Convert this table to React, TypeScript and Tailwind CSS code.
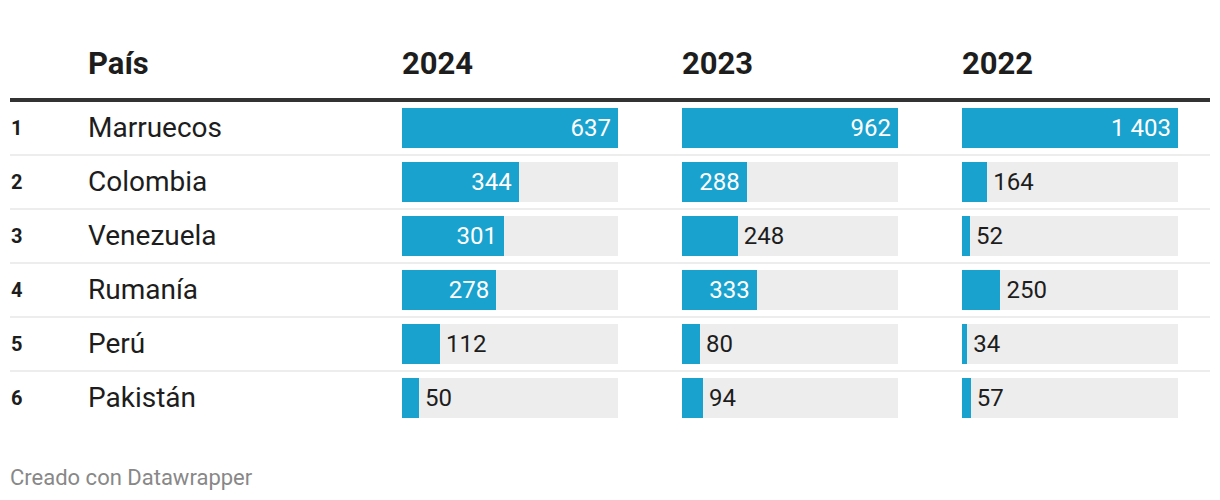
import React from 'react'

type Row = { rank: number; country: string; values: number[] }

const years = ['2024', '2023', '2022']
const maxByYear = [637, 962, 1403]

const rows: Row[] = [
  { rank: 1, country: 'Marruecos', values: [637, 962, 1403] },
  { rank: 2, country: 'Colombia', values: [344, 288, 164] },
  { rank: 3, country: 'Venezuela', values: [301, 248, 52] },
  { rank: 4, country: 'Rumanía', values: [278, 333, 250] },
  { rank: 5, country: 'Perú', values: [112, 80, 34] },
  { rank: 6, country: 'Pakistán', values: [50, 94, 57] },
]

const fmt = (n: number) => (n >= 1000 ? `${Math.floor(n / 1000)}\u00a0${String(n % 1000).padStart(3, '0')}` : String(n))

function Bar({ value, max }: { value: number; max: number }) {
  const width = (value / max) * 216
  const inside = width > 60
  return (
    <div className="relative flex h-[40px] w-[216px] items-center bg-[#ededed] text-[24px]">
      <div className="flex h-full items-center justify-end bg-[#1aa2cf]" style={{ width }}>
        {inside && <span className="pr-[7px] text-white">{fmt(value)}</span>}
      </div>
      {!inside && <span className="pl-[6px] text-[#1d1d1d]">{fmt(value)}</span>}
    </div>
  )
}

export default function App() {
  return (
    <div className="w-[1220px] h-[500px] bg-white px-[10px] font-['Roboto',sans-serif] text-[#1d1d1d]">
      <div className="grid grid-cols-[78px_314px_280px_280px_248px] items-end h-[102px] pb-[16px] border-b-[4px] border-[#333]">
        <div />
        <div className="text-[31px] leading-[36px] font-bold">País</div>
        {years.map((y) => (
          <div key={y} className="text-[31px] leading-[36px] font-bold">{y}</div>
        ))}
      </div>
      {rows.map((r, i) => (
        <div
          key={r.rank}
          className={`grid grid-cols-[78px_314px_280px_280px_248px] items-center py-[6px] ${i < rows.length - 1 ? 'border-b-2 border-[#ededed]' : ''}`}
        >
          <div className="text-[20px] font-bold pl-[1px]">{r.rank}</div>
          <div className="text-[28px] leading-[40px]">{r.country}</div>
          {r.values.map((v, j) => (
            <Bar key={j} value={v} max={maxByYear[j]} />
          ))}
        </div>
      ))}
      <div className="mt-[37px] text-[22px] text-[#888]">Creado con Datawrapper</div>
    </div>
  )
}
